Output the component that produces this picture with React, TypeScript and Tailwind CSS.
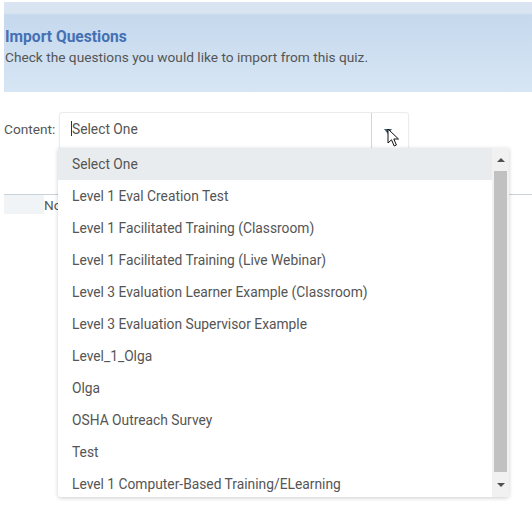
const options = [
  "Select One",
  "Level 1 Eval Creation Test",
  "Level 1 Facilitated Training (Classroom)",
  "Level 1 Facilitated Training (Live Webinar)",
  "Level 3 Evaluation Learner Example (Classroom)",
  "Level 3 Evaluation Supervisor Example",
  "Level_1_Olga",
  "Olga",
  "OSHA Outreach Survey",
  "Test",
  "Level 1 Computer-Based Training/ELearning",
];

const Pointer = () => (
  <svg width="13" height="20" viewBox="0 0 13 20" className="absolute left-[387px] top-[128px]">
    <path
      d="M1 1 L1 15 L4.5 11.8 L7.2 18 L9.4 17 L6.8 11 L11.5 11 Z"
      fill="#fff"
      stroke="#111"
      strokeWidth="1"
      strokeLinejoin="miter"
    />
  </svg>
);

const App = () => {
  return (
    <div className="relative h-[529px] w-[532px] overflow-hidden bg-white font-['Roboto',sans-serif] text-[#555]">
      {/* header */}
      <div className="ml-[4px] mt-[2px] h-[90px] bg-[linear-gradient(to_bottom,#dae4f2_0px,#d9e4f1_11px,#c6d8ed_13px,#d6e6f4_100%)] pl-[1px] pt-[26px]">
        <h1 className="text-[15.6px] font-bold leading-[18px] text-[#4570b3]">Import Questions</h1>
        <p className="mt-[3px] text-[13.7px] leading-[16px] text-[#555]">
          Check the questions you would like to import from this quiz.
        </p>
      </div>

      {/* content picker */}
      <div className="mt-[20px] flex items-start pl-[4px]">
        <span className="mt-[9px] w-[55px] text-[13.7px] leading-[16px]">Content:</span>
        <div className="flex h-[38px] w-[350px] rounded-[3px] border border-[#ececec] bg-white shadow-[0_1px_2px_rgba(0,0,0,0.06)]">
          <div className="flex flex-1 items-start pl-[11px] pt-[7px]">
            <span className="mt-[1px] h-[15px] w-px bg-[#333]" />
            <span className="text-[13.8px] leading-[18px] text-[#555]">Select One</span>
          </div>
          <div className="flex w-[37px] justify-center border-l border-[#cfd6dd] pt-[16px]">
            <svg width="8" height="5" viewBox="0 0 8 5" className="ml-[-4px]">
              <path d="M0 0 H8 L4 5 Z" fill="#3e5a6e" />
            </svg>
          </div>
        </div>
      </div>

      {/* table header behind the dropdown */}
      <div className="ml-[4px] mt-[44px] border-t border-[#c9d1d9]">
        <div className="flex h-[19px] items-center">
          <div className="h-full w-[40px] bg-[#f1f4f7]" />
          <span className="text-[13.7px] leading-[16px]">No</span>
        </div>
      </div>

      {/* open dropdown list */}
      <div className="absolute left-[58px] top-[148px] flex h-[349px] w-[451px] rounded-b-[3px] bg-white shadow-[0_1px_4px_rgba(0,0,0,0.2)]">
        <ul className="flex-1 overflow-hidden">
          {options.map((o, i) => (
            <li
              key={o}
              className={`flex h-[32px] items-center pl-[14px] text-[13.8px] leading-[18px] text-[#555] ${
                i === 0 ? "bg-[#e9ecef]" : ""
              }`}
            >
              {o}
            </li>
          ))}
        </ul>
        <div className="flex w-[17px] flex-col items-center bg-[#f1f1f1]">
          <div className="flex h-[23px] items-center justify-center">
            <svg width="8" height="4" viewBox="0 0 8 4">
              <path d="M0 4 H8 L4 0 Z" fill="#505050" />
            </svg>
          </div>
          <div className="h-[301px] w-[13px] bg-[#c1c1c1]" />
          <div className="flex flex-1 items-center justify-center">
            <svg width="8" height="4" viewBox="0 0 8 4">
              <path d="M0 0 H8 L4 4 Z" fill="#505050" />
            </svg>
          </div>
        </div>
      </div>

      <Pointer />
    </div>
  );
};

export default App;
